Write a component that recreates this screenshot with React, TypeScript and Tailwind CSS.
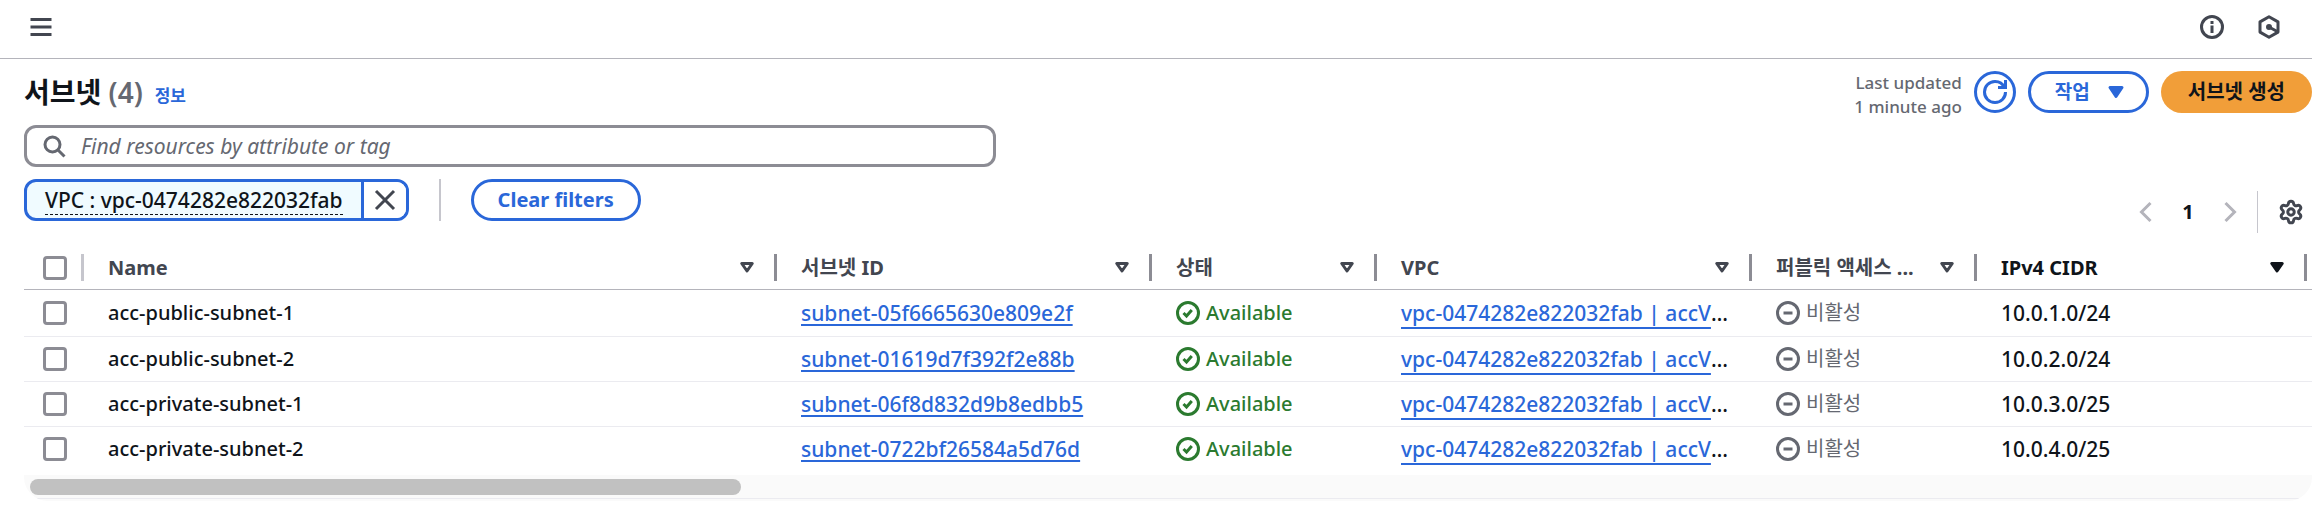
import React from "react";
import { Settings } from "lucide-react";

type IconProps = { className?: string; children: React.ReactNode };

function Icon({ className = "", children }: IconProps) {
  return (
    <svg
      viewBox="0 0 16 16"
      className={`size-6 shrink-0 ${className}`}
      fill="none"
      stroke="currentColor"
      strokeWidth="2"
      strokeLinejoin="round"
      aria-hidden="true"
    >
      {children}
    </svg>
  );
}

function SortIcon({ filled }: { filled?: boolean }) {
  return (
    <Icon>
      <path d="M4.5 5h7L8 10z" fill={filled ? "currentColor" : "none"} />
    </Icon>
  );
}

type Column = { label: string; width: string; sorted?: boolean; korean?: boolean };

const columns: Column[] = [
  { label: "Name", width: "w-[693px]" },
  { label: "서브넷 ID", width: "w-[375px]", korean: true },
  { label: "상태", width: "w-[225px]", korean: true },
  { label: "VPC", width: "w-[375px]" },
  { label: "퍼블릭 액세스 ...", width: "w-[225px]", korean: true },
  { label: "IPv4 CIDR", width: "w-[330px]", sorted: true },
];

const subnets = [
  { name: "acc-public-subnet-1", id: "subnet-05f6665630e809e2f", cidr: "10.0.1.0/24" },
  { name: "acc-public-subnet-2", id: "subnet-01619d7f392f2e88b", cidr: "10.0.2.0/24" },
  { name: "acc-private-subnet-1", id: "subnet-06f8d832d9b8edbb5", cidr: "10.0.3.0/25" },
  { name: "acc-private-subnet-2", id: "subnet-0722bf26584a5d76d", cidr: "10.0.4.0/25" },
];

const checkboxClass =
  "block size-6 appearance-none rounded-[4px] border-3 border-[#8c8c94] bg-white checked:bg-[#2a67d9]";

export default function App() {
  return (
    <div
      lang="ko"
      className="min-h-screen bg-white font-['Noto_Sans','Noto_Sans_CJK_KR',sans-serif] text-[20px] leading-[30px] font-medium text-[#0f141a]"
    >
      <header className="flex h-[59px] items-center justify-between border-b border-[#b4b4bb] pr-[31px] pb-1 pl-[29px] text-[#424650]">
        <button type="button" aria-label="Menu">
          <Icon>
            <path d="M15 3H1M15 8H1M15 13H1" />
          </Icon>
        </button>
        <div className="flex gap-[33px]">
          <button type="button" aria-label="Info">
            <Icon>
              <circle cx="8" cy="8" r="7" />
              <path d="M8 7v5M8 4v2" />
            </Icon>
          </button>
          <button type="button" aria-label="Amazon Q">
            <Icon>
              <path d="M8 1.2 14 4.6v6.800L8 14.8 2 11.400V4.600L8 1.200z" />
              <path d="m8 8 5.5 3" />
              <circle cx="8" cy="8" r="1" />
            </Icon>
          </button>
        </div>
      </header>

      <main className="pt-3 pl-6">
        <div className="flex h-[42px] items-start justify-between">
          <div className="flex h-[42px] items-center gap-3">
            <h1 className="text-[28px] font-bold">
              서브넷 <span className="font-semibold text-[#656871]">(4)</span>
            </h1>
            <a href="#info" className="mt-2 text-[17px] font-bold text-[#2a67d9]">
              정보
            </a>
          </div>
          <div className="flex items-start gap-3 font-bold">
            <p className="text-right text-[17px] leading-6 font-medium text-[#656871]">
              Last updated
              <br />1 minute ago
            </p>
            <button
              type="button"
              aria-label="Refresh"
              className="flex size-[42px] items-center justify-center rounded-full border-3 border-[#2a67d9] text-[#2a67d9]"
            >
              <Icon>
                <path strokeLinejoin="miter" d="M10 5h5V0M15 8a6.957 6.957 0 0 1-7 7 6.957 6.957 0 0 1-7-7 6.957 6.957 0 0 1 7-7 6.87 6.87 0 0 1 6.3 4" />
              </Icon>
            </button>
            <button
              type="button"
              className="flex h-[42px] items-center gap-[14px] rounded-full border-3 border-[#2a67d9] pr-[18px] pl-6 text-[19px] text-[#2a67d9]"
            >
              작업
              <Icon>
                <path d="M4 5h8l-4 6-4-6z" fill="currentColor" />
              </Icon>
            </button>
            <button type="button" className="h-[42px] rounded-full bg-[#f19e39] px-[27px] text-[20px]">
              서브넷 생성
            </button>
          </div>
        </div>

        <label className="mt-3 flex h-[42px] w-[42.5%] items-center gap-[15px] rounded-xl border-3 border-[#8c8c94] px-[15px] text-[#656871]">
          <Icon>
            <circle cx="7" cy="7" r="5" />
            <path d="m15 15-4.5-4.5" />
          </Icon>
          <input
            type="text"
            aria-label="Find resources"
            placeholder="Find resources by attribute or tag"
            className="min-w-0 flex-1 bg-transparent text-[21px] font-normal italic outline-none placeholder:text-[#656871]"
          />
        </label>

        <div className="flex justify-between pt-3">
          <div className="flex h-[42px]">
            <div className="flex rounded-xl border-3 border-[#2a67d9] bg-[#f0fbff]">
              <button type="button" className="flex items-center px-[18px]">
                <span className="border-b border-dashed border-[#0f141a] text-[21px] leading-7">
                  VPC : vpc-0474282e822032fab
                </span>
              </button>
              <button
                type="button"
                aria-label="Remove filter"
                className="flex w-[45px] items-center justify-center rounded-r-[9px] border-l-3 border-[#2a67d9] bg-white text-[#424650]"
              >
                <Icon>
                  <path d="m2 2 12 12M14 2 2 14" />
                </Icon>
              </button>
            </div>
            <div className="mr-[30px] ml-[30px] w-0.5 bg-[#c6c6cd]" />
            <button
              type="button"
              className="rounded-full border-3 border-[#2a67d9] px-6 text-[20px] font-bold text-[#2a67d9]"
            >
              Clear filters
            </button>
          </div>
          <div className="mt-3 flex h-[42px] items-center pr-2">
            <button type="button" aria-label="Previous page" className="text-[#b4b4bb]">
              <Icon>
                <path strokeLinejoin="miter" d="m11 2-6 6 6 6" />
              </Icon>
            </button>
            <button type="button" className="w-[60px] text-[20px] font-bold">
              1
            </button>
            <button type="button" aria-label="Next page" className="text-[#b4b4bb]">
              <Icon>
                <path strokeLinejoin="miter" d="m5 2 6 6-6 6" />
              </Icon>
            </button>
            <div className="mr-5 ml-[15px] h-full w-px bg-[#c6c6cd]" />
            <button type="button" aria-label="Preferences" className="text-[#424650]">
              <Settings className="size-[26px]" strokeWidth={2.75} />
            </button>
          </div>
        </div>

        <div className="mt-[14px] overflow-hidden rounded-b-3xl">
          <table className="w-full min-w-[2283px] table-fixed text-left">
            <thead>
              <tr className="h-[42px] border-b border-[#b4b4bb] text-[20px] text-[#424650]">
                <th className="w-[60px] p-0">
                  <div className="flex items-center justify-between pl-[19px]">
                    <input type="checkbox" aria-label="Select all" className={checkboxClass} />
                    <span className="h-[27px] w-[3px] bg-[#c6c6cd]" />
                  </div>
                </th>
                {columns.map((c) => (
                  <th key={c.label} className={`p-0 ${c.width} ${c.sorted ? "text-[#0f141a]" : ""}`}>
                    <div className="flex items-center pl-6">
                      <span className="min-w-0 flex-1 font-bold whitespace-nowrap">{c.label}</span>
                      <button type="button" aria-label={`Sort by ${c.label}`} className="mr-[15px] ml-4">
                        <SortIcon filled={c.sorted} />
                      </button>
                      <span className="h-[27px] w-[3px] bg-[#8c8c94]" />
                    </div>
                  </th>
                ))}
                <th aria-hidden="true" />
              </tr>
            </thead>
            <tbody>
              {subnets.map((s) => (
                <tr key={s.id} className="h-[45px] border-b border-[#ebebf0] first:h-[47px] last:border-b-0">
                  <td className="p-0 pl-[19px]">
                    <input type="checkbox" aria-label={`Select ${s.name}`} className={checkboxClass} />
                  </td>
                  <td className="p-0 pl-6">{s.name}</td>
                  <td className="p-0 pl-6 text-[21px]">
                    <a href={`#${s.id}`} className="text-[#2a67d9] underline decoration-2 underline-offset-3">
                      {s.id}
                    </a>
                  </td>
                  <td className="p-0 pl-6 text-[#2b7a2f]">
                    <span className="flex items-center gap-1.5">
                      <Icon>
                        <circle cx="8" cy="8" r="7" />
                        <path strokeLinejoin="miter" d="m5 8 2 2 3.521-4" />
                      </Icon>
                      Available
                    </span>
                  </td>
                  <td className="truncate p-0 pr-[18px] pl-6 text-[21px]">
                    <a
                      href="#vpc-0474282e822032fab"
                      className="text-[#2a67d9] underline decoration-2 underline-offset-6"
                    >
                      vpc-0474282e822032fab | accVPC
                    </a>
                  </td>
                  <td className="p-0 pl-6 text-[#656871]">
                    <span className="flex items-center gap-1.5 font-normal">
                      <Icon>
                        <circle cx="8" cy="8" r="7" />
                        <path d="M11 8H5" />
                      </Icon>
                      비활성
                    </span>
                  </td>
                  <td className="p-0 pl-6 text-[21px]">{s.cidr}</td>
                  <td />
                </tr>
              ))}
            </tbody>
          </table>
          <div className="mt-1 h-[26px] bg-[#fafafa] px-1.5 pt-1">
            <div className="h-5 border-b border-[#ebebf0]">
              <div className="h-4 w-5/16 rounded-full bg-[#c1c1c1]" />
            </div>
          </div>
        </div>
      </main>
    </div>
  );
}
